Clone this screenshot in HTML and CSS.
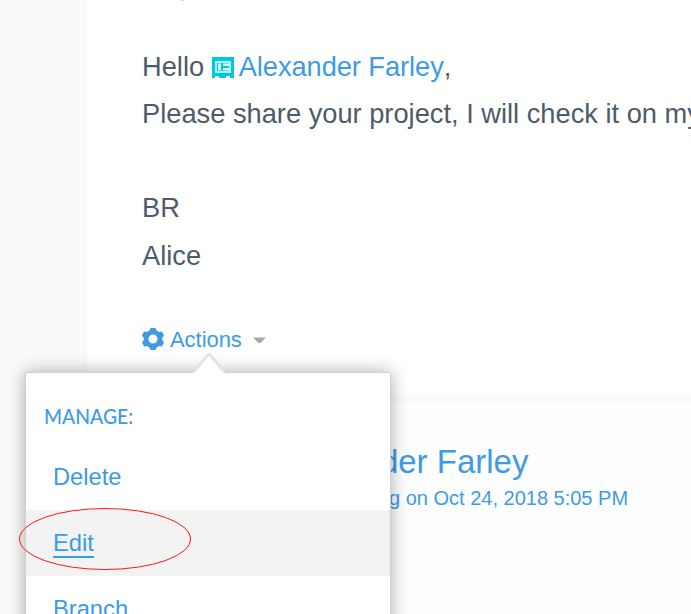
FILE: index.html
```html
<!DOCTYPE html>
<html lang="en">
<head>
<meta charset="utf-8">
<title>Discussion</title>
<link rel="stylesheet" href="styles.css">
</head>
<body>
<main class="thread">
  <article class="post first">
    <div class="message">
      <p>Hello <svg class="badge" viewBox="0 0 22 21"><path fill="#00c8e1" d="M0 0h22v21H0z"/><path fill="#b5f0f7" d="M3 4h16v12H3z"/><path fill="#00c8e1" d="M5 6h12v8H5z"/><path fill="#d9f8fb" d="M6 6.500h3v7H6zM11 6.500h6v2.500h-6zM11 11h6v2.500h-6z"/><path fill="#fff" d="M3 19h4v2H3zM14 19h4v2h-4z"/></svg><a class="mention">Alexander Farley</a>,</p>
      <p>Please share your project, I will check it on my</p>
      <p class="blank"></p>
      <p>BR</p>
      <p>Alice</p>
    </div>
    <div class="actions">
      <svg class="gear" viewBox="0 0 22 22"><path fill="#3c9be9" fill-rule="evenodd" d="M8.500 0h5l1 2.600 2.600 1.400 2.800-.6L22 7.600 20.200 10v2l1.800 2.400-2.100 4.200-2.800-.6-2.600 1.400-1 2.600h-5l-1-2.600L4.900 18l-2.800.6L0 14.400 1.800 12v-2L0 7.600l2.100-4.200 2.800.6 2.600-1.400zM11 6.500a4.500 4.500 0 1 0 0 9 4.500 4.500 0 0 0 0-9z"/></svg>
      <span class="label">Actions</span>
      <svg class="caret" viewBox="0 0 13 7"><path fill="#a8a8a8" d="M0 .5h13L7.500 6h-2z"/></svg>
      <div class="menu">
        <svg class="pointer" viewBox="0 0 32 21"><path fill="#fff" d="M0 21 16 2 32 21z"/><path fill="none" stroke="#e4e4e4" stroke-width="3" d="M1 19.500 14.500 3.200Q16 1.500 17.500 3.200L31 19.500"/></svg>
        <h2>MANAGE:</h2>
        <a class="item">Delete</a>
        <a class="item active"><span>Edit</span></a>
        <a class="item">Branch</a>
        <svg class="ring" viewBox="0 0 172 62"><ellipse cx="86" cy="31" rx="85.500" ry="30.500" fill="none" stroke="#ff1515"/></svg>
      </div>
    </div>
  </article>
  <article class="post reply">
    <h1>Alexander Farley</h1>
    <div class="date">g on Oct 24, 2018 5:05 PM</div>
  </article>
</main>
</body>
</html>
```
FILE: styles.css
```css
* { box-sizing: border-box; }
body {
  margin: 0;
  height: 614px;
  overflow: hidden;
  background: #fafafa;
  font-family: "Liberation Sans", Arial, sans-serif;
  color: #3c9be9;
}
.thread { margin-left: 87px; display: flex; flex-direction: column; gap: 7px; }
.post { background: #fff; }
.first {
  height: 395px;
  padding: 42.500px 0 0 55px;
  background: linear-gradient(#f3cfd0, #f3cfd0) 94px 0 / 3px 1px no-repeat #fff;
}
.message { font-size: 27.250px; line-height: 47.250px; color: #4d5c68; white-space: nowrap; }
.message p { margin: 0; height: 47.250px; }
.mention { color: #3c9be9; letter-spacing: -.06px; }
.badge { width: 22px; height: 21px; margin-right: 5px; vertical-align: -2px; }
.actions { position: relative; display: flex; align-items: center; height: 26px; margin-top: 47.250px; font-size: 22px; }
.gear { width: 22px; height: 22px; margin-right: 6px; }
.label { padding-top: 1px; letter-spacing: -.05px; }
.caret { width: 13px; height: 7px; margin: 2px 0 0 11px; }
.menu {
  position: absolute;
  z-index: 2;
  left: -117px;
  top: 46px;
  width: 366px;
  height: 300px;
  padding-top: 29px;
  border: 1px solid #d0d0d0;
  background: #fff;
  box-shadow: 0 0 17px rgba(0, 0, 0, .32);
}
.menu h2 {
  width: 120px;
  height: 28px;
  margin: 0 0 14px 18px;
  font: 500 22px/28px Lato, sans-serif;
  transform: scaleX(.88);
  transform-origin: left;
}
.item { display: block; height: 66px; padding-left: 27px; font-size: 23.700px; line-height: 66px; }
.active { background: #f3f3f3; }
.active span { display: inline-block; line-height: 25px; border-bottom: 2px solid #3c9be9; }
.pointer { position: absolute; left: 167px; top: -21px; width: 32px; height: 21px; }
.ring { position: absolute; left: -7px; top: 135px; width: 172px; height: 62px; }
.reply { height: 212px; padding: 40px 0 0 192px; background: #fefefe; white-space: nowrap; }
.reply h1 { margin: 0; font-size: 33px; font-weight: 400; line-height: 40px; }
.date { padding-left: 110px; font-size: 20px; line-height: 32px; }
```
